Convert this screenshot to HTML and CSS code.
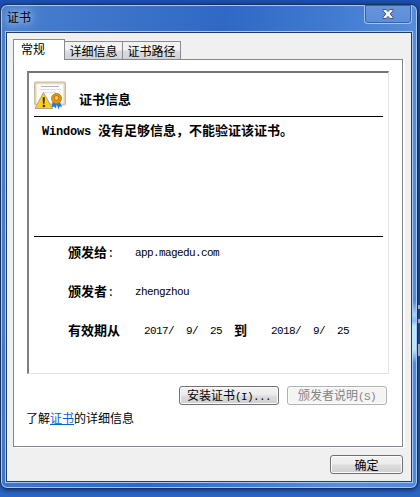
FILE: index.html
```html
<!DOCTYPE html>
<html lang="zh-CN">
<head>
    <meta charset="UTF-8">
    <meta name="viewport" content="width=device-width, initial-scale=1.0">
    <title>证书</title>
    <link rel="stylesheet" href="styles.css">
</head>
<body>
    <div class="window">
        <div class="titlebar">
            <span class="title">证书</span>
            <button class="close" aria-label="关闭">
                <svg width="12" height="10" viewBox="0 0 12 10">
                    <path d="M1 .5h3.200L6 2.600 7.800 .5H11v1.300L8.200 5 11 8.200v1.300H7.800L6 7.400 4.200 9.500H1V8.200L3.800 5 1 1.800z" fill="#f4f4f4" stroke="#4a5468"/>
                </svg>
            </button>
        </div>

        <div class="client">
            <div class="tabs">
                <div class="tab active">常规</div>
                <div class="tab">详细信息</div>
                <div class="tab">证书路径</div>
            </div>

            <div class="page">
                <div class="info">
                    <div class="info-head">
                        <svg class="cert-icon" width="32" height="30" viewBox="0 0 32 30">
                            <rect x=".5" y="1" width="31" height="23" rx="1" fill="#e2d1b4" stroke="#cbbba0"/>
                            <rect x="2.500" y="3" width="27" height="19" fill="#fcfcfb" stroke="#f1e7d4"/>
                            <path d="M7 5.500h18" stroke="#a9b2d6"/>
                            <path d="M5 8.500h22M10 11.500h12" stroke="#dcdee8"/>
                            <path d="M18.500 21l-1 6 2.500-1.500 2 2 1-5.500zM22 21l2.500 7.500 1.200-3 2.300 .5-2.500-6z" fill="#2879d8"/>
                            <circle cx="22.500" cy="17.500" r="5" fill="#e39a12" stroke="#c67b10"/>
                            <circle cx="22.500" cy="17" r="2.500" fill="#f5c24a" stroke="#b8700b"/>
                            <path d="M9.500 11.500L1 27.500h17.500z" fill="#fbd01c" stroke="#aaa58f" stroke-linejoin="round"/>
                            <path d="M9 16.500h1.500l-.3 6H9.300zM9 24h1.700v1.800H9z" fill="#222" stroke="#222" stroke-width=".5"/>
                        </svg>
                        <h1>证书信息</h1>
                    </div>
                    <div class="message"><span class="latin">Windows</span>没有足够信息，不能验证该证书。</div>
                    <div class="details">
                        <div class="row">
                            <span class="label">颁发给<i>:</i></span>
                            <span class="latin">app.magedu.com</span>
                        </div>
                        <div class="row">
                            <span class="label">颁发者<i>:</i></span>
                            <span class="latin">zhengzhou</span>
                        </div>
                        <div class="row dates">
                            <span class="label">有效期从</span>
                            <span class="latin">2017/  9/  25</span>
                            <b>到</b>
                            <span class="latin">2018/  9/  25</span>
                        </div>
                    </div>
                </div>

                <div class="actions">
                    <button class="btn">安装证书<span class="latin">(I)...</span></button>
                    <button class="btn" disabled>颁发者说明<span class="latin">(S)</span></button>
                </div>
                <p class="learn">了解<a href="#">证书</a>的详细信息</p>
            </div>

            <div class="footer">
                <button class="btn ok">确定</button>
            </div>
        </div>
        <div class="glow"></div>
    </div>
    <div class="spark one"></div>
    <div class="spark two"></div>
    <div class="spark three"></div>
</body>
</html>
```
FILE: styles.css
```css
* {
    box-sizing: border-box;
}

body {
    position: relative;
    width: 420px;
    height: 497px;
    margin: 0;
    padding-top: 4px;
    overflow: hidden;
    background: linear-gradient(#1c50b0, #1b4a9c 60%, #2b66c4 98%);
    font-family: "Noto Sans CJK SC", sans-serif;
    font-size: 12px;
    color: #000;
}

.window {
    position: relative;
    width: 418px;
    height: 485px;
    padding: 0 5px 5px;
    border: 1px solid #17305c;
    border-radius: 7px;
    background: linear-gradient(100deg, #4b80cd, #3068c5 45%, #3f7ad0 65%, #5a8edb 85%, #5189dc);
    box-shadow: inset 0 0 0 1px #a9c8f0, 0 1px 5px #0b2a62;
}

.titlebar {
    display: flex;
    justify-content: space-between;
    height: 27px;
}

.title {
    padding-left: 1px;
    line-height: 24px;
    text-shadow: 0 0 6px #a9c8f0, 0 0 10px #a9c8f0, 0 0 14px #a9c8f0;
}

.close {
    display: flex;
    align-items: center;
    justify-content: center;
    width: 48px;
    height: 19px;
    padding: 0;
    border: 1px solid #a3c3ee;
    border-top: none;
    border-radius: 0 0 4px 4px;
    background: linear-gradient(#6595dd, #5b8edb);
    box-shadow: inset 0 0 0 1px #3a62a3;
}

.client {
    height: 450px;
    padding: 6px 7px 0 6px;
    border: 1px solid #1f3b6c;
    outline: 1px solid #a7c8f2;
    background: #f0f0f0;
}

.tabs {
    display: flex;
    align-items: flex-end;
    height: 20px;
}

.tab {
    width: 58px;
    height: 18px;
    border: 1px solid #898c95;
    border-left-width: 0;
    border-bottom: none;
    background: linear-gradient(#f2f2f2 48%, #dddddd 52%, #d2d2d2);
    line-height: 17px;
    text-align: center;
}

.tab.active {
    position: relative;
    z-index: 1;
    width: 52px;
    height: 21px;
    margin-bottom: -1px;
    padding-left: 7px;
    border-left-width: 1px;
    background: #fff;
    text-align: left;
}

.page {
    width: 390px;
    height: 388px;
    padding: 11px 13px;
    border: 1px solid #828790;
    background: #fff;
    box-shadow: 2px 1px 0 #fff;
}

.info {
    width: 362px;
    height: 303px;
    padding: 8px 5px;
    border: 2px solid #808080;
    border-top-color: #757575;
    border-right: 1px solid #e3e3e3;
    border-bottom: 1px solid #e3e3e3;
}

.info-head {
    display: flex;
    height: 36px;
    border-bottom: 1px solid #000;
}

h1 {
    margin: 8px 0 0 13px;
    font-size: 13px;
    line-height: 19px;
}

.latin {
    font-family: "Liberation Mono", monospace;
    font-size: 11px;
    letter-spacing: -.6px;
    white-space: pre;
}

.message {
    height: 120px;
    padding: 3px 0 0 8px;
    border-bottom: 1px solid #000;
    font-size: 13px;
    font-weight: bold;
    line-height: 19px;
    white-space: nowrap;
}

.message .latin {
    margin-right: 7px;
    font-size: 12px;
    letter-spacing: -.2px;
}

.details {
    padding: 5px 0 0 34px;
}

.row {
    display: flex;
    height: 39px;
    line-height: 19px;
}

.row .latin {
    padding-top: 2px;
}

.label,
.row b {
    font-size: 13px;
    font-weight: bold;
}

.label {
    width: 67px;
}

.label i {
    padding-left: 2px;
    font-style: normal;
    font-weight: normal;
}

.dates .label {
    width: 76px;
}

.row b {
    width: 49px;
    padding-left: 12px;
}

.actions {
    display: flex;
    justify-content: flex-end;
    gap: 8px;
    margin: 12px 2px 0 0;
}

.btn {
    width: 100px;
    height: 19px;
    padding: 0;
    border: 1px solid #707070;
    border-radius: 3px;
    background: linear-gradient(#f3f3f3, #ebebeb 48%, #dddddd 52%, #cfcfcf);
    box-shadow: inset 0 0 0 1px #fbfbfb;
    color: #000;
    font-family: inherit;
    font-size: 12px;
    line-height: 15px;
    white-space: nowrap;
}

.btn:disabled {
    border-color: #adb2b5;
    background: #f4f4f4;
    color: #838383;
}

.learn {
    margin: 3px 0 0 -1px;
    line-height: 19px;
}

.learn a {
    color: #0066cc;
}

.footer {
    display: flex;
    justify-content: flex-end;
    padding: 8px 1px 0 0;
}

.ok {
    width: 73px;
}

.glow {
    position: absolute;
    top: 296px;
    right: 1px;
    width: 4px;
    height: 62px;
    background: linear-gradient(transparent, #a5d3fb 22%, #7fbaf5 32%, #bfe6ff 40%, #bfe6ff 78%, transparent);
}

.spark {
    position: absolute;
    right: 0;
    width: 2px;
    height: 4px;
    background: #9dabb4;
}

.one {
    top: 305px;
}

.two {
    top: 319px;
}

.three {
    top: 344px;
    height: 12px;
}
```
